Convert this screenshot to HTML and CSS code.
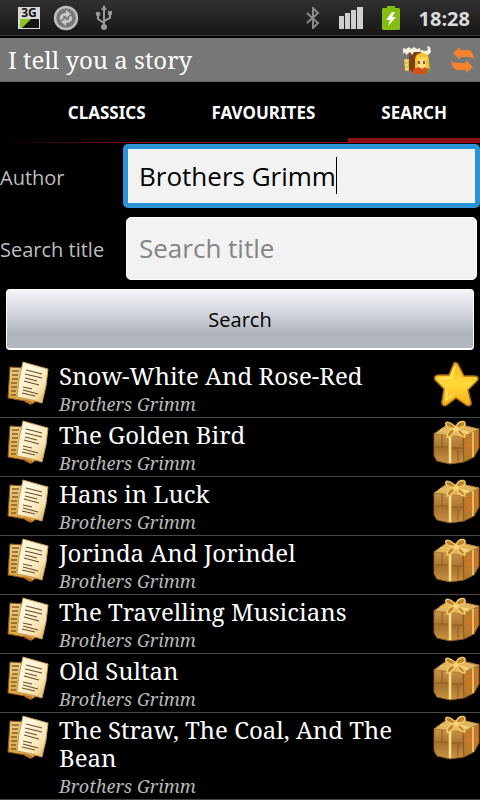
FILE: index.html
```html
<!DOCTYPE html>
<html lang="en">
<head>
<meta charset="utf-8">
<meta name="viewport" content="width=device-width, initial-scale=1">
<title>I tell you a story</title>
<link rel="stylesheet" href="styles.css">
</head>
<body>
<svg class="sprite" aria-hidden="true">
  <defs>
    <linearGradient id="g-page" x1="0" y1="0" x2="1" y2="1"><stop offset="0.3" stop-color="#fff6dc"/><stop offset="0.7" stop-color="#f8e5b5"/><stop offset="1" stop-color="#dca545"/></linearGradient>
    <linearGradient id="g-back" x1="0" y1="0" x2="0" y2="1"><stop offset="0" stop-color="#e8cd88"/><stop offset="1" stop-color="#dca038"/></linearGradient>
    <linearGradient id="g-star" x1="0" y1="0" x2="0" y2="1"><stop offset="0" stop-color="#f8b81c"/><stop offset="0.5" stop-color="#ffd93a"/><stop offset="1" stop-color="#f5ad10"/></linearGradient>
    <linearGradient id="g-box" x1="0" y1="0" x2="0" y2="1"><stop offset="0" stop-color="#c8954a"/><stop offset="0.5" stop-color="#a87230"/><stop offset="1" stop-color="#c99345"/></linearGradient>
  </defs>
  <symbol id="pages" viewBox="0 0 44 46">
    <path d="M3 6l14 1 12 33-4 3-7-3L1 37z" fill="url(#g-back)" stroke="#8f5a18"/>
    <path d="M5 10h7M5 14h6M5 18h6M4 22h6M4 26h6M4 30h5M4 34h5" stroke="#8a5e1c" stroke-width="1.3"/>
    <path d="M16 1l7 2 18 5-2 17-4 17-10-3-15-3 2-17z" fill="url(#g-page)" stroke="#c79b56"/>
    <path d="M19 9l16 4M18 13l17 4M18 17l12 3M17 20l15 4M16 26l9 2M16 29l15 4M15 32l13 3" stroke="#6a4e2a" stroke-width="1.1"/>
    <path d="M16 38l9 3-1 3-6-3z" fill="#bd742a"/>
  </symbol>
  <symbol id="star" viewBox="0 0 46 46">
    <path d="M21 2c2-1 4 0 5 3l5 10 11 0c3 0 4 3 2 5l-9 9 3 12c1 3-2 5-5 3l-10-7-9 7c-3 2-6 0-5-4l2-12-8-8c-3-3-1-6 3-6l10 0z" fill="url(#g-star)" stroke="#a5681c" stroke-width="1.5"/>
    <path d="M22 5l-4 12-12 1M14 30l-1 9 8-6" fill="none" stroke="#ffec70" stroke-width="1.5"/>
  </symbol>
  <symbol id="gift" viewBox="0 0 48 46">
    <path d="M2 14L31 16 32 42 18 44 5 41 2 36z" fill="url(#g-box)" stroke="#8a5a1f" stroke-linejoin="round"/>
    <path d="M31 16L47 9 47 28 42 37 32 42z" fill="#b87a2c" stroke="#8a5a1f" stroke-linejoin="round"/>
    <path d="M2 14L13 6 30 5 47 9 31 17z" fill="#e0b560" stroke="#b07f33" stroke-linejoin="round"/>
    <path d="M18 15v28" stroke="#ffe08c" stroke-width="2.5"/>
    <path d="M3 27h13M20 28h11M10 15v12M26 29v12" stroke="#8a5a22" fill="none"/>
    <path d="M41 12v25M8 10l29 2" stroke="#e8bd60" stroke-width="2" fill="none"/>
    <path d="M18 15l5-6 13 4" stroke="#f8d98a" stroke-width="2" fill="none"/>
    <path d="M35 21l3-2-3 7 4-1-4 8M45 14v14" stroke="#dd7425" stroke-width="1.5" fill="none"/>
    <path d="M24 8C19 1 12 1 14 5c1 3 6 4 10 3zM24 8c1-7 8-8 9-5 1 4-4 5-9 5zM23 9c-6 0-8 4-8 8 5 0 7-4 8-8zM25 9c4 1 8 4 8 8-5 0-7-4-8-8z" fill="#bb8430" stroke="#f3c965" stroke-width="1.5"/>
    <circle cx="24" cy="9" r="2.5" fill="#f7d679"/>
  </symbol>
</svg>

<header>
  <div class="status-bar">
    <div class="status-left">
      <svg width="22" height="30" viewBox="0 -4 22 30" role="img" aria-label="3G">
        <path d="M0 0h22v22H0z" fill="#d8d8d8"/>
        <path d="M2 12h19v9H2z" fill="#151515"/>
        <path d="M2 12h11l-9 9H2z" fill="#8fc31f"/>
        <text x="11" y="10" class="net-text">3G</text>
      </svg>
      <svg width="26" height="26" viewBox="0 0 26 26" aria-hidden="true">
        <circle cx="13" cy="13" r="11" fill="#787878" stroke="#bdbdbd" stroke-width="2.5"/>
        <path d="M7 15c-1-5 2-7 6-7V5l5 4-5 4v-2c-3-1-3 2-3 3zM19 11c1 5-2 7-6 7v3l-5-4 5-4v2c3 1 3-2 3-3z" fill="#c6c6c6"/>
      </svg>
      <svg width="22" height="26" viewBox="-3 0 22 26" aria-hidden="true">
        <path d="M9 4v17M9 18L3 14v-4M9 16l6-3V9" fill="none" stroke="#999" stroke-width="2"/>
        <path d="M9 0l3 5H6zM13 6h4v4h-4z" fill="#999"/>
        <circle cx="3" cy="9" r="2.3" fill="#999"/><circle cx="9" cy="22" r="3" fill="#999"/>
      </svg>
    </div>
    <div class="status-right">
      <svg width="14" height="22" viewBox="0 0 14 22" aria-hidden="true"><path d="M1 6l11 10-5 5V1l5 5L1 16" fill="none" stroke="#8a8a8a" stroke-width="2"/></svg>
      <svg width="24" height="22" viewBox="0 0 24 22" aria-hidden="true"><path d="M0 9h5v13H0zM6 6h5v16H6zM12 3h5v19h-5zM18 0h6v22h-6z" fill="#cfcfcf"/></svg>
      <svg width="18" height="24" viewBox="0 0 18 24" aria-hidden="true"><path d="M5 0h8v2h4l1 1v20l-1 1H1l-1-1V3l1-1h4z" fill="#86bd12"/><path d="M10 6l-6 8h4l-2 6 8-9h-4l3-5z" fill="#fff"/></svg>
      <time class="clock">18:28</time>
    </div>
  </div>
  <div class="title-bar">
    <h1>I tell you a story</h1>
    <button type="button" aria-label="Storyteller">
      <svg width="28" height="30" viewBox="0 0 28 30" aria-hidden="true">
        <path d="M1 14h5v12H2z" fill="#e2c04a"/>
        <path d="M6 6h13v6l-7 16-6-3z" fill="#7b411b"/>
        <path d="M0 3l3 1 3-2 2 2 3-2 3 2 3-1 1 4-7 0-2 3-2-3-4 3-1-3-2 2z" fill="#f6f0df"/>
        <path d="M18 5l4 1 3-1-1-4 3 1 1 5-3 3-7-1z" fill="#f6f0df"/>
        <path d="M12 14q1-7 8-6 7 1 6 9l1 9H12z" fill="#f4c02c"/>
        <path d="M15 15h8v8h-8z" fill="#ffdd8c"/>
        <path d="M14 12h10v3H14z" fill="#f9d44e"/>
        <path d="M16 16v3M21 16v3" stroke="#56301a" stroke-width="1.5"/>
        <path d="M10 24l6-2 3 2 3-2 3 3-1 4H10z" fill="#d84e1d"/>
        <path d="M24 23l3 1-1 4h-3z" fill="#6e8a34"/>
        <path d="M2 16h3M2 20h3M2 24h3" stroke="#fff0a0"/>
      </svg>
    </button>
    <button type="button" aria-label="Refresh">
      <svg width="24" height="26" viewBox="0 0 24 26" aria-hidden="true">
        <path d="M9 0v3h9q4 1 5 9-3-2-5-2H9v3L2 6z" fill="#f5822d"/>
        <path d="M15 26v-3H6q-5-1-6-9 3 2 6 2h9v-3l7 7z" fill="#f5822d"/>
      </svg>
    </button>
  </div>
  <nav class="tabs">
    <a href="#classics">CLASSICS</a>
    <a href="#favourites">FAVOURITES</a>
    <a href="#search" class="active" aria-current="page">SEARCH</a>
  </nav>
</header>

<main>
  <form class="search-form">
    <div class="field">
      <label for="author">Author</label>
      <div class="box focused">
        <input type="text" id="author" name="author" value="Brothers Grimm">
        <span class="caret"></span>
      </div>
    </div>
    <div class="field">
      <label for="title">Search title</label>
      <div class="box"><input type="text" id="title" name="title" placeholder="Search title"></div>
    </div>
    <button type="button" class="search-btn">Search</button>
  </form>

  <ul class="stories">
    <li>
      <svg class="pages"><use href="#pages"/></svg>
      <div class="info"><h2>Snow-White And Rose-Red</h2><p>Brothers Grimm</p></div>
      <svg class="mark"><use href="#star"/></svg>
    </li>
    <li>
      <svg class="pages"><use href="#pages"/></svg>
      <div class="info"><h2>The Golden Bird</h2><p>Brothers Grimm</p></div>
      <svg class="mark"><use href="#gift"/></svg>
    </li>
    <li>
      <svg class="pages"><use href="#pages"/></svg>
      <div class="info"><h2>Hans in Luck</h2><p>Brothers Grimm</p></div>
      <svg class="mark"><use href="#gift"/></svg>
    </li>
    <li>
      <svg class="pages"><use href="#pages"/></svg>
      <div class="info"><h2>Jorinda And Jorindel</h2><p>Brothers Grimm</p></div>
      <svg class="mark"><use href="#gift"/></svg>
    </li>
    <li>
      <svg class="pages"><use href="#pages"/></svg>
      <div class="info"><h2>The Travelling Musicians</h2><p>Brothers Grimm</p></div>
      <svg class="mark"><use href="#gift"/></svg>
    </li>
    <li>
      <svg class="pages"><use href="#pages"/></svg>
      <div class="info"><h2>Old Sultan</h2><p>Brothers Grimm</p></div>
      <svg class="mark"><use href="#gift"/></svg>
    </li>
    <li>
      <svg class="pages"><use href="#pages"/></svg>
      <div class="info"><h2>The Straw, The Coal, And The Bean</h2><p>Brothers Grimm</p></div>
      <svg class="mark"><use href="#gift"/></svg>
    </li>
  </ul>
</main>
</body>
</html>
```

FILE: styles.css
```css
* { box-sizing: border-box; }
body { margin: 0; background: #000; color: #fff; font-family: "Droid Sans", "Open Sans", "Noto Sans", sans-serif; }
h1, h2, p, ul { margin: 0; padding: 0; font-weight: normal; }
svg { display: block; flex: none; }
button { font-family: inherit; cursor: pointer; }
.sprite { position: absolute; width: 0; height: 0; }

/* status bar */
.status-bar { display: flex; justify-content: space-between; align-items: center; height: 38px; padding: 0 10px 0 18px; background: linear-gradient(#303030, #161616); border-bottom: 2px solid #000; box-shadow: inset 0 -1px #3c3c3c; }
.status-left { display: flex; align-items: center; gap: 13px; }
.status-right { display: flex; align-items: center; gap: 19px; }
.clock { font-size: 20px; font-weight: bold; color: #dcdcdc; }
.net-text { font-size: 12px; font-weight: bold; text-anchor: middle; fill: #111; }

/* title bar */
.title-bar { display: flex; align-items: center; gap: 20px; height: 44px; padding: 0 5px 0 8px; background: #777; border-bottom: 1px solid #666; }
.title-bar h1 { flex: 1; font-family: "Droid Serif", "Noto Serif", "Liberation Serif", serif; font-size: 24px; line-height: 44px; }
.title-bar button { padding: 0; border: 0; background: none; }

/* tabs */
.tabs { display: flex; justify-content: flex-end; height: 61px; background: linear-gradient(to right, transparent, #900c10 30%) bottom / 100% 1px no-repeat; }
.tabs a { padding: 0 33px; color: #fff; font-family: "Droid Sans", "Noto Sans", sans-serif; font-size: 17px; font-weight: bold; line-height: 61px; text-decoration: none; }
.tabs .active { box-shadow: inset 0 -5px #900c10; }

/* search form */
.search-form { display: flex; flex-direction: column; gap: 6px; padding-bottom: 9px; }
.field { display: flex; align-items: center; height: 66px; padding-right: 3px; }
.field label { width: 126px; padding-top: 2px; color: #bebebe; font-size: 20px; }
.box { position: relative; flex: 1; }
.box input { display: block; width: 100%; height: 63px; padding: 0 12px; border: 1px solid #fff; border-radius: 5px; background: #f2f2f2; color: #000; font-family: inherit; font-size: 26px; outline: 0; }
.box input::placeholder { color: #858585; opacity: 1; }
.focused input { height: 58px; padding: 0 11px; border: 2px solid #2b93d6; box-shadow: 0 0 0 3px #2b93d6; border-radius: 2px; }
.caret { position: absolute; left: 210px; top: 10px; width: 1px; height: 37px; background: #000; }
.search-btn { height: 61px; margin: 2px 6px 0; padding: 0; border: 1px solid #fff; border-bottom-width: 2px; border-radius: 4px; background: linear-gradient(#f4f5f8, #cfd2d9 45%, #b0b4bd 75%, #b4b8c1); color: #000; font-size: 20px; }

/* result list */
.stories { list-style: none; }
.stories li { display: flex; align-items: flex-start; padding: 3px 0 2px; border-bottom: 1px solid #484848; }
.pages, .mark { height: 46px; margin-top: -1px; }
.pages { width: 44px; margin-right: 8px; margin-left: 7px; }
.mark { width: 48px; }
.info { flex: 1; min-width: 0; font-family: "Droid Serif", "Noto Serif", "Liberation Serif", serif; }
.info h2 { font-size: 24px; line-height: 28px; }
.info p { margin-top: 3px; color: #b8b8b8; font-size: 18px; line-height: 22px; font-style: italic; }
```
